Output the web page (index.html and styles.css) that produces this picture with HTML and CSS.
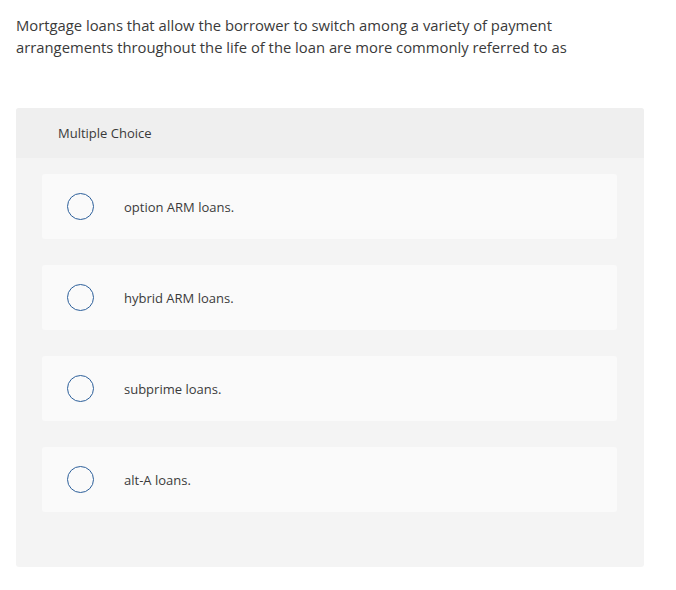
FILE: index.html
```html
<!DOCTYPE html>
<html lang="en">
<head>
    <meta charset="UTF-8">
    <meta name="viewport" content="width=device-width, initial-scale=1.0">
    <title>Multiple Choice</title>
    <link rel="stylesheet" href="styles.css">
</head>
<body>
    <p class="question">Mortgage loans that allow the borrower to switch among a variety of payment arrangements throughout the life of the loan are more commonly referred to as</p>

    <div class="question-panel">
        <div class="panel-header">Multiple Choice</div>
        <div class="choices">
            <label class="choice">
                <span class="radio"></span>
                <span class="choice-text">option ARM loans.</span>
            </label>
            <label class="choice">
                <span class="radio"></span>
                <span class="choice-text">hybrid ARM loans.</span>
            </label>
            <label class="choice">
                <span class="radio"></span>
                <span class="choice-text">subprime loans.</span>
            </label>
            <label class="choice">
                <span class="radio"></span>
                <span class="choice-text">alt-A loans.</span>
            </label>
        </div>
    </div>
</body>
</html>
```

FILE: styles.css
```css
body {
    font-family: "Open Sans", "Liberation Sans", sans-serif;
    margin: 0;
    padding: 14px 16px;
    background-color: #fff;
    color: #3a3a3a;
}
.question {
    margin: 0;
    width: 560px;
    font-size: 14.8px;
    line-height: 22px;
    color: #3a3a3a;
}
.question-panel {
    margin-top: 50px;
    width: 628px;
    background-color: #f4f4f4;
    border-radius: 3px;
    padding-bottom: 55px;
}
.panel-header {
    height: 50px;
    display: flex;
    align-items: center;
    padding-left: 42px;
    background-color: #efefef;
    border-radius: 3px 3px 0 0;
    font-size: 13px;
    color: #3a3a3a;
}
.choices {
    display: flex;
    flex-direction: column;
    gap: 26px;
    padding: 16px 27px 0 26px;
}
.choice {
    height: 65px;
    display: flex;
    align-items: center;
    background-color: #fafafa;
    border-radius: 3px;
    padding-left: 25px;
    cursor: pointer;
}
.radio {
    width: 25px;
    height: 25px;
    border: 1.5px solid #2c5f9a;
    border-radius: 50%;
    flex-shrink: 0;
}
.choice-text {
    margin-left: 30px;
    font-size: 13px;
    color: #3a3a3a;
}
```
